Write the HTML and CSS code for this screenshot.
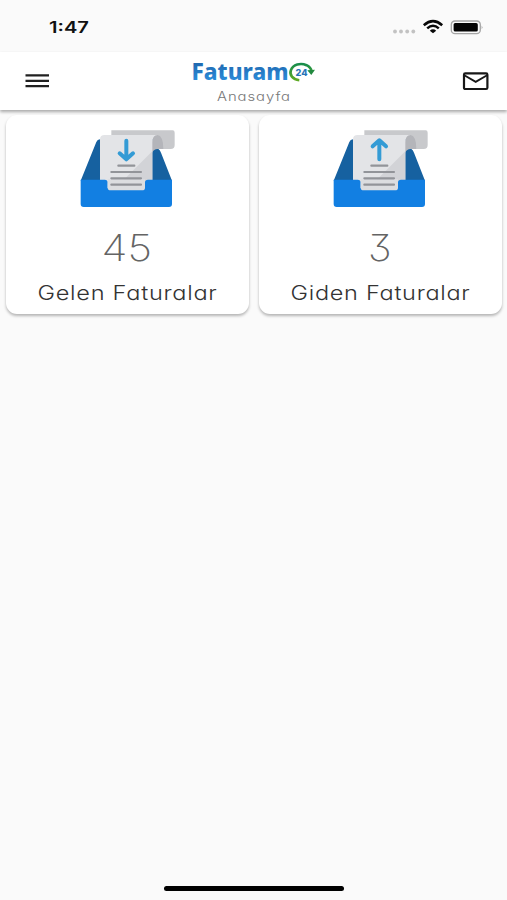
FILE: index.html
```
<!DOCTYPE html>
<html lang="tr">
<head>
<meta charset="utf-8">
<title>Faturam24</title>
<link rel="stylesheet" href="styles.css">
</head>
<body>
<div class="status">
  <svg class="time" width="42" height="20"><text x="1" y="13" textLength="40" lengthAdjust="spacingAndGlyphs">1:47</text></svg>
  <svg class="signals" width="94" height="20" viewBox="0 0 94 20">
    <g fill="#c2c2c2"><circle cx="5" cy="13.5" r="1.9"/><circle cx="11" cy="13.5" r="1.9"/><circle cx="17.2" cy="13.5" r="1.9"/><circle cx="23.3" cy="13.5" r="1.9"/></g>
    <g fill="none" stroke="#080808" stroke-width="2.5"><path d="M33.8 7.2Q43-1 52.2 7.2M37.2 10.4Q43 5.2 48.8 10.4"/></g>
    <path d="M39.8 12.7Q43 10 46.2 12.7L43 15.3Z" fill="#080808"/>
    <rect x="61.3" y="3" width="29" height="12.6" rx="3.6" fill="#fafafa" stroke="#a5a5a5" stroke-width="1.3"/>
    <rect x="63.6" y="5.1" width="24.2" height="8.4" rx="1.6" fill="#050505"/>
    <path d="M91.7 7.4Q93.4 9.3 91.7 11.2Z" fill="#999"/>
  </svg>
</div>
<header class="bar">
  <svg class="menu" width="24" height="16" viewBox="0 0 24 16"><path d="M.5 2.4H24M.5 7.8H24M.5 13.2H24" stroke="#202020" stroke-width="2.2"/></svg>
  <div class="brand">
    <svg width="126" height="54" viewBox="0 0 126 54">
      <defs>
        <linearGradient id="blue" x1="0" y1="0" x2="0" y2="1"><stop offset=".2" stop-color="#1f67ae"/><stop offset=".8" stop-color="#2c8ddb"/></linearGradient>
        <linearGradient id="green" x1="0" y1="0" x2="0" y2="1"><stop offset="0" stop-color="#188d4c"/><stop offset="1" stop-color="#5da923"/></linearGradient>
      </defs>
      <text class="logo" x="-.5" y="28" textLength="97" lengthAdjust="spacingAndGlyphs" fill="url(#blue)">Faturam</text>
      <path d="M107.3 28.2C100.5 27.5 97.2 22.8 98.9 18.2C101 12.5 108.5 10.5 114.5 13.2Q118.9 15.4 119.5 19" fill="none" stroke="url(#green)" stroke-width="2.6"/>
      <path d="M115.3 18.3L123 17.8L119.3 23Z" fill="#22893f"/>
      <text class="tiny" x="103.6" y="23.7" textLength="12" lengthAdjust="spacingAndGlyphs">24</text>
      <text class="page" x="25" y="49" textLength="74" lengthAdjust="spacingAndGlyphs">Anasayfa</text>
    </svg>
  </div>
  <svg class="mail" width="27" height="19" viewBox="0 0 27 19"><rect x="2" y="1.4" width="23.4" height="15.6" rx="1.3" fill="none" stroke="#171717" stroke-width="2.2"/><path d="M2.3 3.2L13.7 9.8L25.1 3.2" fill="none" stroke="#171717" stroke-width="1.9"/></svg>
</header>
<main class="cards">
  <section class="card">
    <svg class="tray" width="115" height="95" viewBox="0 0 345 285">
      <path d="M79 66Q82 58 90 58H248L266 88Q270 90 273 98L306 182H32Z" fill="#1661a0"/>
      <path d="M124 31H308Q314 31 314 38V75Q314 87 302 87H270L246 52H124Z" fill="#c8c9cc"/>
      <path d="M246 98V62Q248 45 262 45Q280 47 280 87H262Q252 87 246 98Z" fill="#b4b5ba"/>
      <path d="M90 190V58Q90 45 104 45H262Q247 46 247 66V190Z" fill="#e3e4e7"/>
      <path d="M247 94L163 178V190H247Z" fill="#d2d3d7"/>
      <path d="M32 179H104Q113 179 113 187V204H225V187Q225 179 234 179H306V252Q306 261 297 261H41Q32 261 32 252Z" fill="#127fe2"/>
      <path d="M113 178H225V203Q225 211 216 211H122Q113 211 113 203Z" fill="#dcdde0"/>
      <path d="M145 137H193M124 156H213M124 175H213M124 194H213" stroke="#929499" stroke-width="6.5" stroke-linecap="round"/>
      <path d="M169 62V117M149 100L169 118L189 100" fill="none" stroke="#349bd5" stroke-width="12" stroke-linecap="round" stroke-linejoin="round"/>
    </svg>
    <svg class="caption" width="243" height="100">
      <text class="count" x="95.5" y="50.5" textLength="50.5" lengthAdjust="spacingAndGlyphs">45</text>
      <text class="label" x="31.5" y="89.5" textLength="180" lengthAdjust="spacingAndGlyphs">Gelen Faturalar</text>
    </svg>
  </section>
  <section class="card">
    <svg class="tray" width="115" height="95" viewBox="0 0 345 285">
      <path d="M79 66Q82 58 90 58H248L266 88Q270 90 273 98L306 182H32Z" fill="#1661a0"/>
      <path d="M124 31H308Q314 31 314 38V75Q314 87 302 87H270L246 52H124Z" fill="#c8c9cc"/>
      <path d="M246 98V62Q248 45 262 45Q280 47 280 87H262Q252 87 246 98Z" fill="#b4b5ba"/>
      <path d="M90 190V58Q90 45 104 45H262Q247 46 247 66V190Z" fill="#e3e4e7"/>
      <path d="M247 94L163 178V190H247Z" fill="#d2d3d7"/>
      <path d="M32 179H104Q113 179 113 187V204H225V187Q225 179 234 179H306V252Q306 261 297 261H41Q32 261 32 252Z" fill="#127fe2"/>
      <path d="M113 178H225V203Q225 211 216 211H122Q113 211 113 203Z" fill="#dcdde0"/>
      <path d="M145 137H193M124 156H213M124 175H213M124 194H213" stroke="#929499" stroke-width="6.5" stroke-linecap="round"/>
      <path d="M169 118V62M149 79L169 61L189 79" fill="none" stroke="#349bd5" stroke-width="12" stroke-linecap="round" stroke-linejoin="round"/>
    </svg>
    <svg class="caption" width="243" height="100">
      <text class="count" x="109" y="50.5" textLength="23.5" lengthAdjust="spacingAndGlyphs">3</text>
      <text class="label" x="31.5" y="89.5" textLength="180" lengthAdjust="spacingAndGlyphs">Giden Faturalar</text>
    </svg>
  </section>
</main>
<div class="home"></div>
</body>
</html>
```
FILE: styles.css
```
* { box-sizing: border-box; }
body {
  margin: 0;
  height: 900px;
  display: flex;
  flex-direction: column;
  background: #fafafa;
  font-family: Inter, "Liberation Sans", sans-serif;
  font-feature-settings: "cv11" 1, "cv09" 1;
  overflow: hidden;
}
svg { display: block; overflow: visible; }
.status {
  height: 52px;
  padding: 18px 23px 0 48px;
  display: flex;
  justify-content: space-between;
}
.time { margin-top: 2px; }
.time text { font-size: 15.5px; font-weight: 600; fill: #111; }
.bar {
  height: 58px;
  padding: 0 18px 0 25px;
  display: grid;
  grid-template-columns: 167px 126px 1fr;
  background: #fff;
  box-shadow: 0 2px 3px rgba(0, 0, 0, .32);
}
.menu { margin-top: 21px; }
.mail { margin-top: 20px; justify-self: end; }
.logo { font-family: "Noto Sans", sans-serif; font-size: 22.5px; font-weight: 800; }
.tiny { font-size: 9.5px; font-weight: 800; fill: #2674b8; }
.page { font-size: 12.5px; font-weight: 300; letter-spacing: .8px; fill: #777; }
.cards {
  flex: 1;
  padding: 5px 5px 0 6px;
  display: grid;
  grid-template-columns: 243px 243px;
  align-items: start;
  gap: 10px;
}
.card {
  height: 199px;
  padding-top: 5px;
  display: flex;
  flex-direction: column;
  align-items: center;
  background: #fff;
  border-radius: 11px;
  box-shadow: 0 2px 3px rgba(0, 0, 0, .28);
}
.tray { flex: none; }
.caption { flex: none; margin-top: -5px; }
.count { font-size: 36px; font-weight: 250; fill: #646464; }
.label { font-size: 20px; font-weight: 300; letter-spacing: .6px; fill: #333; }
.home {
  width: 180px;
  height: 5px;
  margin: 0 auto 9px;
  border-radius: 3px;
  background: #000;
}
```
